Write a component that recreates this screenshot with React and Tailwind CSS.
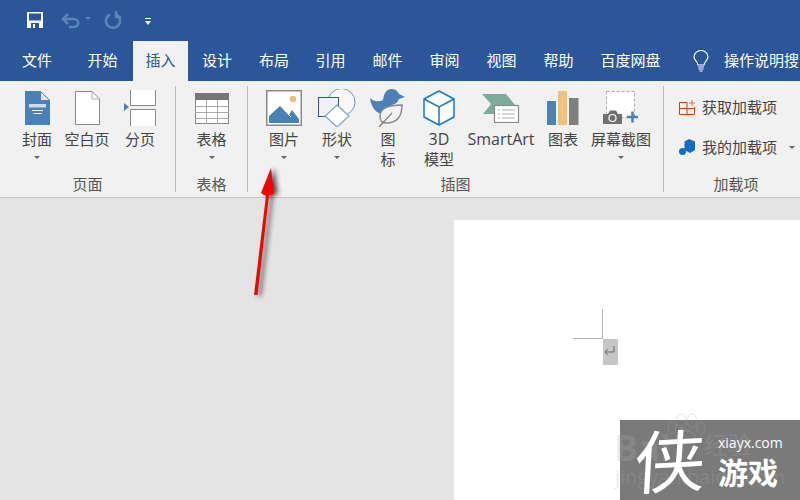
import React from "react";

function Tab({ w, active, children }) {
  return (
    <div className={`${w} h-full pb-[1px] flex items-center justify-center shrink-0 text-[15px] ${active ? "bg-[#f1f1f1] text-[#2b579a]" : "text-white"}`}>
      {children}
    </div>
  );
}

function Caret({ className = "" }) {
  return <div className={`w-0 h-0 border-l-[3px] border-r-[3px] border-t-[3px] border-l-transparent border-r-transparent border-t-[#666] ${className}`} />;
}

function RibbonBtn({ w, icon, lines, caret }) {
  return (
    <div className={`${w} flex flex-col items-center shrink-0`}>
      <div className="h-[40px] w-full flex items-center justify-center">{icon}</div>
      <div className="mt-[1px] flex flex-col items-center text-[15px] leading-[20px] whitespace-nowrap">
        {lines.map((l) => <span key={l} className={/^[A-Za-z0-9]+$/.test(l) ? "text-[16px]" : ""}>{l}</span>)}
      </div>
      {caret && <Caret className="mt-[7px]" />}
    </div>
  );
}

function Group({ w, label, children, pl, labelClass = "" }) {
  return (
    <div className={`${w} h-full flex flex-col shrink-0`}>
      <div className={`h-[92px] pt-[7px] flex ${pl}`}>{children}</div>
      <div className={`h-[24px] pb-[1px] flex items-center justify-center text-[15px] text-[#555] ${labelClass}`}>{label}</div>
    </div>
  );
}

const Sep = () => <div className="w-px my-[5px] bg-[#b9b9b9] shrink-0" />;

const Cover = () => (
  <svg width="25" height="34" viewBox="0 0 25 34">
    <path d="M0 0H15L25 10V34H0Z" fill="#4c80b8" />
    <path d="M15 0H25V10Z" fill="#f1f1f1" />
    <path d="M15.500 .5V9.500H25Z" fill="#dbe6f1" stroke="#4c80b8" />
    <rect x="4" y="13" width="17" height="3.500" fill="#e4ebf4" opacity=".85" />
    <path d="M7 19.500H18M8.500 22.500H16.500" stroke="#fff" />
  </svg>
);
const Blank = () => (
  <svg width="25" height="34" viewBox="0 0 25 34">
    <path d="M.5 .5H17L24.500 8V33.500H.5Z" fill="#fff" stroke="#888" />
    <path d="M17 .5V8H24.500" fill="none" stroke="#aaa" />
  </svg>
);
const Break = () => (
  <svg width="32" height="36" viewBox="0 0 32 36">
    <path d="M6.500 0V15.500H31.500V0" fill="#fff" stroke="#888" />
    <path d="M6.500 36V19.500H31.500V36" fill="#fff" stroke="#888" />
    <path d="M0 13L5 17L0 21Z" fill="#4c80b8" />
  </svg>
);
const Table = () => (
  <svg width="34" height="31" viewBox="0 0 34 31">
    <rect x=".5" y=".5" width="33" height="30" fill="#fff" stroke="#888" />
    <rect width="34" height="7" fill="#767676" />
    <path d="M0 13.500H34M0 19.500H34M0 25.500H34M11.500 7V31M22.500 7V31" stroke="#aaa" fill="none" />
  </svg>
);
const Picture = () => (
  <svg width="36" height="36" viewBox="0 0 36 36">
    <rect x=".75" y=".75" width="34.500" height="34.500" fill="#fff" stroke="#8a8a8a" strokeWidth="1.500" />
    <circle cx="27" cy="9" r="3.300" fill="#eec27e" />
    <path d="M3 33V26L14 16L23 25L26 20L33 29V33Z" fill="#4c80b8" />
    <path d="M18 20L25 27" stroke="#fff" />
  </svg>
);
const Shapes = () => (
  <svg width="38" height="38" viewBox="0 0 38 38">
    <circle cx="23.500" cy="13" r="13.500" fill="#f8f8f8" stroke="#6d97c6" />
    <rect x=".5" y="8.500" width="20" height="19" fill="#f1f1f1" stroke="#2b579a" />
    <path d="M19 16L31 27L19 38L7 27Z" fill="#fff" stroke="#7fa3cc" strokeWidth="1.200" />
  </svg>
);
const Icons = () => (
  <svg width="36" height="38" viewBox="0 0 36 38">
    <path d="M0 9C4 13 9 13 13 11C14 6 15 0 22 0C26 0 28 3 29 5L35 8L29 10C28 13 26 15 22 16L12 25C5 24 1 17 0 9Z" fill="#4c80b8" />
    <path d="M32 16C20 16 10 19 10 27C10 31 12 34 16 34C26 34 32 28 32 16Z" fill="#f1f1f1" stroke="#8a8a8a" strokeWidth="1.500" />
    <path d="M9 38L22 24" stroke="#8a8a8a" strokeWidth="1.500" />
  </svg>
);
const Cube = () => (
  <svg width="32" height="36" viewBox="0 0 32 36">
    <path d="M16 1L31 9V27L16 35L1 27V9Z" fill="#fff" stroke="#1b78c8" strokeWidth="1.500" strokeLinejoin="round" />
    <path d="M1 9L16 17L31 9M16 17V35" fill="none" stroke="#1b78c8" strokeWidth="1.500" />
  </svg>
);
const SmartArt = () => (
  <svg width="38" height="29" viewBox="0 0 38 29">
    <path d="M0 0H24L33 11H14V20H1L9 10Z" fill="#7dab9a" />
    <rect x="12.500" y="11.500" width="24" height="17" fill="#fff" stroke="#8a8a8a" strokeWidth="1.200" />
    <path d="M16 16H18M20 16H33M16 20H18M20 20H33M16 24H18M20 24H33" stroke="#aaa" />
  </svg>
);
const Chart = () => (
  <svg width="32" height="34" viewBox="0 0 32 34">
    <rect x="0" y="10" width="9" height="24" fill="#4c80b8" />
    <rect x="11" y="0" width="9" height="34" fill="#eec27e" />
    <rect x="22" y="7" width="9.500" height="27" fill="#7f7f7f" />
  </svg>
);
const Screenshot = () => (
  <svg width="36" height="34" viewBox="0 0 36 34">
    <rect x="3.500" y=".5" width="28" height="26" fill="#fff" stroke="#aaa" strokeDasharray="3 2" />
    <path d="M0 23H5L7 19.500H13L15 23H19V33H0Z" fill="#6f6f6f" />
    <circle cx="9.500" cy="27" r="3.500" fill="#6f6f6f" stroke="#fff" strokeWidth="1.200" />
    <path d="M29.500 20.500V31.500M24 26H35" stroke="#4c80b8" strokeWidth="2.500" />
  </svg>
);
const GetAddin = () => (
  <svg width="16" height="16" viewBox="0 0 16 16">
    <path d="M8 3.500H.5V15.500H15.500V8M.5 9.500H15.500M8 3.500V15.500" fill="none" stroke="#d83b01" />
    <path d="M13 1V7M10 4H16" stroke="#e86a50" />
  </svg>
);
const MyAddin = () => (
  <svg width="16" height="16" viewBox="0 0 16 16">
    <path d="M10 0L16 2.500V11L11 14L5.500 11V2.500Z" fill="#0f6fc6" />
    <circle cx="3.500" cy="12.500" r="3.500" fill="#0f6fc6" />
  </svg>
);

export default function App() {
  return (
    <div
      className="relative w-[800px] h-[500px] overflow-hidden flex flex-col bg-[#e4e4e4] text-[#444]"
      style={{ fontFamily: '"Open Sans","Noto Sans CJK SC",sans-serif' }}
    >
      {/* Title bar */}
      <div className="h-[41px] shrink-0 bg-[#2b579a] flex items-center pl-[27px] pb-[1px]">
        <svg width="16" height="16" viewBox="0 0 16 16">
          <path d="M0 0H16V16H0Z" fill="#fff" />
          <rect x="2" y="1.500" width="12" height="7" fill="#2b579a" />
          <rect x="4" y="11" width="8" height="5" fill="#2b579a" />
          <rect x="6" y="12" width="2" height="4" fill="#fff" />
        </svg>
        <svg className="ml-[18px]" width="20" height="17" viewBox="0 0 20 17">
          <path d="M3 7H12C19 7 19 15 12 15H8M7 2L2 7L7 12" fill="none" stroke="#5f83b8" strokeWidth="2.500" />
        </svg>
        <div className="ml-[4px] mb-[4px] w-0 h-0 border-l-[3px] border-r-[3px] border-t-[3px] border-l-transparent border-r-transparent border-t-[#5f83b8]" />
        <svg className="ml-[13px]" width="18" height="18" viewBox="0 0 18 18">
          <path d="M12 3.500A7 7 0 1 1 6 3.500M12 0V6H17" fill="none" stroke="#5f83b8" strokeWidth="2.500" />
        </svg>
        <div className="ml-[23px] mt-[2px] flex flex-col items-center gap-[2px]">
          <div className="w-[6px] h-px bg-white" />
          <div className="w-0 h-0 border-l-[3px] border-r-[3px] border-t-[4px] border-l-transparent border-r-transparent border-t-white" />
        </div>
      </div>

      {/* Tabs */}
      <div className="h-[40px] shrink-0 bg-[#2b579a] flex items-stretch">
        <Tab w="w-[74px]">文件</Tab>
        <Tab w="w-[57px] mr-[2px]">开始</Tab>
        <Tab w="w-[55px]" active>插入</Tab>
        <Tab w="w-[58px]">设计</Tab>
        <Tab w="w-[56px]">布局</Tab>
        <Tab w="w-[57px]">引用</Tab>
        <Tab w="w-[57px]">邮件</Tab>
        <Tab w="w-[57px]">审阅</Tab>
        <Tab w="w-[57px]">视图</Tab>
        <Tab w="w-[57px]">帮助</Tab>
        <Tab w="w-[87px]">百度网盘</Tab>
        <div className="ml-[19px] flex items-center shrink-0">
          <svg width="16" height="22" viewBox="0 0 16 22">
            <path d="M5 15C5 12 1 10 1 7A7 6.500 0 0 1 15 7C15 10 11 12 11 15Z" fill="none" stroke="#fff" strokeWidth="1.200" />
            <path d="M5 17H11M5.500 19H10.500M6.500 21H9.500" stroke="#fff" />
          </svg>
        </div>
        <div className="ml-[15px] pb-[1px] flex items-center text-[15px] text-white whitespace-nowrap">操作说明搜</div>
      </div>

      {/* Ribbon */}
      <div className="h-[116px] shrink-0 bg-[#f1f1f1] flex">
        <Group w="w-[175px]" label="页面" pl="pl-[13px]">
          <RibbonBtn w="w-[48px]" icon={<Cover />} lines={["封面"]} caret />
          <RibbonBtn w="w-[52px]" icon={<Blank />} lines={["空白页"]} />
          <RibbonBtn w="w-[54px]" icon={<Break />} lines={["分页"]} />
        </Group>
        <Sep />
        <Group w="w-[71px]" label="表格" pl="justify-center">
          <RibbonBtn w="w-[50px]" icon={<Table />} lines={["表格"]} caret />
        </Group>
        <Sep />
        <Group w="w-[415px]" label="插图" pl="pl-[12px]">
          <RibbonBtn w="w-[48px]" icon={<Picture />} lines={["图片"]} caret />
          <RibbonBtn w="w-[58px]" icon={<Shapes />} lines={["形状"]} caret />
          <RibbonBtn w="w-[44px]" icon={<Icons />} lines={["图", "标"]} />
          <RibbonBtn w="w-[58px]" icon={<Cube />} lines={["3D", "模型"]} />
          <RibbonBtn w="w-[66px]" icon={<SmartArt />} lines={["SmartArt"]} />
          <RibbonBtn w="w-[58px]" icon={<Chart />} lines={["图表"]} />
          <RibbonBtn w="w-[58px]" icon={<Screenshot />} lines={["屏幕截图"]} caret />
        </Group>
        <Sep />
        <Group w="w-[136px]" label="加载项" labelClass="pl-[8px]" pl="pl-[15px] flex-col gap-[18px]">
          <div className="flex items-center gap-[7px] text-[15px] leading-[22px] mt-[8px] whitespace-nowrap">
            <GetAddin />
            <span>获取加载项</span>
          </div>
          <div className="flex items-center gap-[7px] text-[15px] leading-[22px] whitespace-nowrap">
            <MyAddin />
            <span>我的加载项</span>
            <Caret className="ml-[5px]" />
          </div>
        </Group>
      </div>

      {/* Document area */}
      <div className="flex-1 border-t border-[#c6c6c6] pl-[454px] pt-[22px] flex">
        <div className="flex-1 bg-white" />
      </div>

      {/* Paragraph mark and crop marks */}
      <div className="absolute left-[602px] top-[309px] w-px h-[29px] bg-[#b0b0b0]" />
      <div className="absolute left-[573px] top-[338px] w-[30px] h-px bg-[#b0b0b0]" />
      <div className="absolute left-[603px] top-[339px] w-[15px] h-[26px] bg-[#c6c6c6] flex items-center justify-start pl-[1px] pb-[3px]">
        <svg width="11" height="10" viewBox="0 0 11 10">
          <path d="M10 0V6H1M4 3L1 6L4 9" fill="none" stroke="#666" />
        </svg>
      </div>

      {/* Logo stamp background */}
      <div className="absolute left-[620px] top-[420px] w-[180px] h-[80px] bg-[#7a7a7a]" />

      {/* Baidu watermark, faint over page and stamp */}
      <div className="absolute left-[614px] top-[430px] text-[36px] leading-[36px] text-[#aaaaaa40] font-bold">Bai</div>
      <div className="absolute left-[704px] top-[432px] text-[24px] leading-[26px] text-[#aaaaaa40]">经验</div>
      <div className="absolute left-[615px] top-[465px] text-[20px] leading-[24px] text-[#aaaaaa40] whitespace-nowrap">jingyan.baidu.com</div>
      <svg className="absolute left-[664px] top-[412px]" width="44" height="36" viewBox="0 0 44 36">
        <g fill="none" stroke="#aaaaaa50">
          <ellipse cx="8" cy="16" rx="4" ry="6" />
          <ellipse cx="17" cy="9" rx="5" ry="7" />
          <ellipse cx="28" cy="9" rx="5" ry="7" />
          <ellipse cx="37" cy="16" rx="4" ry="6" />
          <path d="M12 30C12 22 17 19 22 19C27 19 32 22 32 30" />
        </g>
      </svg>

      {/* Logo stamp text */}
      <div className="absolute left-[620px] top-[420px] w-[180px] h-[80px] flex text-white">
        <div className="w-[98px] pl-[16px] text-[68px] leading-[76px] font-normal -rotate-3 -skew-x-6 scale-x-105" style={{ fontFamily: '"Noto Sans CJK SC",sans-serif' }}>侠</div>
        <div className="flex flex-col pt-[12px]">
          <span className="text-[14px] leading-[22px]">xiayx.com</span>
          <span className="text-[30px] leading-[36px] font-bold -mt-[1px]" style={{ fontFamily: '"Noto Sans CJK SC",sans-serif' }}>游戏</span>
        </div>
      </div>

      {/* Red arrow annotation */}
      <svg className="absolute left-[240px] top-[160px]" width="60" height="145" viewBox="0 0 60 145">
        <defs>
          <filter id="sh" x="-50%" y="-20%" width="200%" height="140%">
            <feGaussianBlur stdDeviation="2.500" />
          </filter>
        </defs>
        <path d="M15 136L27 38L22 33L31 8L35 34L30 35L18 136Z" fill="#222" opacity=".8" filter="url(#sh)" transform="translate(3,0)" />
        <path d="M14 135L26 36L21 33L31 8L34 34L29 35L17.500 135Z" fill="#f60000" />
      </svg>
    </div>
  );
}
